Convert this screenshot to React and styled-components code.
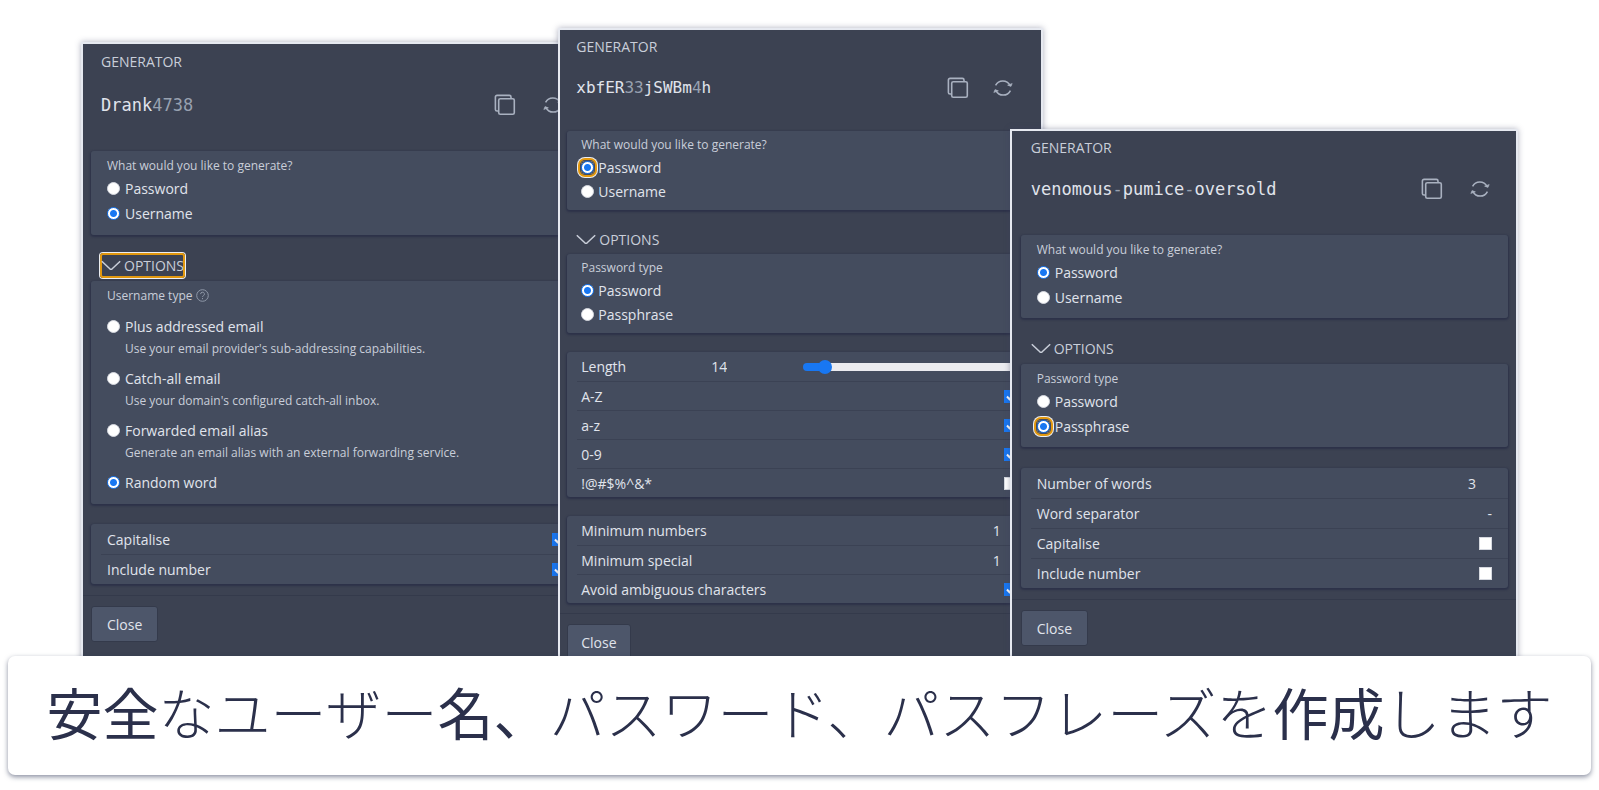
import React, { useId, useState } from 'react'
import styled, { createGlobalStyle, css, ThemeProvider } from 'styled-components'

const GlobalStyle = createGlobalStyle`
  *, *::before, *::after {
    box-sizing: border-box;
  }

  body {
    margin: 0;
    background: #fff;
    font-family: 'Open Sans', 'Noto Sans CJK JP', sans-serif;
  }
`

const colors = {
  background: '#3c4252',
  card: '#444c5e',
  button: '#4d566a',
  border: '#343a4b',
  shadow: '#2d3249',
  text: '#e0e4ec',
  muted: '#c9ced9',
  icon: '#a9b1c0',
  digit: '#98a1b0',
  blue: '#1877f2',
  focus: '#e2980f',
}

const regular = {
  mono: 17,
  inset: 8,
  insetRight: 8,
  pad: 16,
  titlePad: 10,
  titleHeight: 36,
  valueHeight: 50,
  valueGap: 21,
  labelGap: 6,
  groupEnd: 9,
  radio: 25,
  radioGap: 5,
  optionsHeight: 25,
  optionsMargin: '18px 0 3px',
  row: 30,
  cardGap: 20,
  lastGap: 11,
  iconGap: 24,
}

const themes = {
  username: regular,
  password: {
    ...regular,
    mono: 16,
    inset: 7,
    insetRight: 10,
    pad: 14,
    titlePad: 9,
    titleHeight: 34,
    valueHeight: 47,
    valueGap: 20,
    labelGap: 5,
    groupEnd: 7,
    radio: 24,
    radioGap: 4,
    optionsHeight: 22,
    optionsMargin: '18px 0 4px',
    row: 29,
    cardGap: 19,
    lastGap: 10,
    iconGap: 21,
  },
  passphrase: { ...regular, inset: 9, titleHeight: 33, groupEnd: 8, cardGap: 21 },
}

const Page = styled.main`
  min-height: 790px;
`

const Stage = styled.div`
  display: flex;
  align-items: flex-start;
  height: 656px;
  padding: 0 81px;
  overflow: hidden;
`

const Window = styled.section`
  flex: ${props => props.grow} 1 0;
  min-width: 0;
  height: 700px;
  margin-top: ${props => props.top}px;
  border: 2px solid #e6e9f0;
  background: ${colors.background};
  color: ${colors.text};
  font-size: 14px;
  font-weight: 500;
  box-shadow: 0 0 6px rgba(60, 66, 100, 0.4);
  /* keeps every window above the one on its left */
  isolation: isolate;

  & + & {
    margin-left: -33px;
  }
`

const Body = styled.div`
  padding: 0 ${props => props.theme.insetRight}px 0 ${props => props.theme.inset}px;
`

const Title = styled.h2`
  height: ${props => props.theme.titleHeight}px;
  line-height: ${props => props.theme.titleHeight}px;
  margin: 0;
  padding-left: ${props => props.theme.titlePad}px;
  font-size: 14px;
  font-weight: 500;
  color: ${colors.muted};
`

const ValueRow = styled.div`
  display: flex;
  align-items: center;
  gap: ${props => props.theme.iconGap}px;
  height: ${props => props.theme.valueHeight}px;
  margin-bottom: ${props => props.theme.valueGap}px;
  padding: 0 16px 0 ${props => props.theme.titlePad}px;
`

const Value = styled.output`
  flex: 1;
  font-family: 'DejaVu Sans Mono', monospace;
  font-size: ${props => props.theme.mono}px;
`

const Digit = styled.span`
  color: ${colors.digit};
`

const IconButton = styled.button`
  display: flex;
  align-items: center;
  justify-content: center;
  width: 24px;
  height: 24px;
  padding: 0;
  border: 0;
  background: none;
  color: ${colors.icon};
`

const Card = styled.div`
  margin: 0 0 ${props => (props.last ? props.theme.lastGap : props.theme.cardGap)}px;
  border-radius: 3px;
  background: ${colors.card};
  box-shadow: 0 1px 2px 1px ${colors.shadow};
`

const Group = styled.fieldset`
  min-width: 0;
  margin: 0 0 ${props => (props.spaced ? props.theme.cardGap : 0)}px;
  padding: ${props => props.theme.labelGap}px ${props => props.theme.pad}px ${props => props.theme.groupEnd}px;
  border: 0;
  border-radius: 3px;
  background: ${colors.card};
  box-shadow: 0 1px 2px 1px ${colors.shadow};
`

const Legend = styled.legend`
  float: left;
  display: flex;
  align-items: center;
  gap: 4px;
  width: 100%;
  height: 17px;
  margin-bottom: 2px;
  padding: 0;
  font-size: 12px;
  color: ${colors.muted};

  & + * {
    clear: both;
  }
`

const RadioRow = styled.label`
  display: flex;
  align-items: center;
  gap: ${props => props.theme.radioGap}px;
  height: ${props => props.theme.radio}px;
`

const RadioItem = styled.div`
  padding-top: ${props => (props.spaced ? 8 : 0)}px;
`

const RadioMark = styled.span`
  display: flex;
  border-radius: 4px;
  ${props => props.focused && css`
    box-shadow: 0 0 0 1px #3f4a63, 0 0 0 3px ${colors.focus}, 0 0 0 4px #eceef2;
  `}
`

const RadioInput = styled.input`
  appearance: none;
  width: 13px;
  height: 13px;
  margin: 0;
  border: 1px solid #d5d8df;
  border-radius: 50%;
  background: #fff;

  &:checked {
    border-color: ${colors.blue};
    background: radial-gradient(circle, ${colors.blue} 3px, #fff 4px);
  }
`

const Description = styled.p`
  height: 19px;
  line-height: 19px;
  margin: 0 0 0 18px;
  font-size: 12px;
  color: ${colors.muted};
  white-space: nowrap;
`

const OptionsButton = styled.button`
  display: flex;
  align-items: center;
  gap: 3px;
  height: ${props => props.theme.optionsHeight}px;
  margin: ${props => props.theme.optionsMargin};
  margin-left: ${props => props.theme.titlePad - 1}px;
  padding: 0 1px;
  border: 0;
  border-radius: 3px;
  background: none;
  color: ${colors.muted};
  font: inherit;
  ${props => props.focused && css`
    box-shadow: inset 0 0 0 2px ${colors.focus}, 0 0 0 1px #eceef2;
  `}
`

const Row = styled.div`
  display: flex;
  align-items: center;
  height: ${props => props.theme.row}px;
  margin-left: 10px;
  padding: 0 ${props => props.theme.pad}px 0 ${props => props.theme.pad - 10}px;

  & + & {
    border-top: 1px solid #3b4254;
  }
`

const RowLabel = styled.label`
  flex: 1;
`

const LengthLabel = styled.label`
  width: 96px;
`

const Field = styled.input`
  width: 66px;
  padding: 0 ${props => (props.type === 'number' ? 16 : 0)}px 0 0;
  border: 0;
  outline: 0;
  background: none;
  color: ${colors.text};
  font: inherit;
  text-align: right;
  appearance: textfield;

  &::-webkit-inner-spin-button {
    display: none;
  }
`

const CheckMark = styled.span`
  display: grid;
  width: 13px;
  height: 13px;

  & > * {
    grid-area: 1 / 1;
  }

  & > svg {
    pointer-events: none;
    z-index: 1;
  }
`

const CheckInput = styled.input`
  appearance: none;
  width: 13px;
  height: 13px;
  margin: 0;
  border: 1px solid #d5d8df;
  background: #fff;

  &:checked {
    border-color: ${colors.blue};
    background: ${colors.blue};
  }
`

const Slider = styled.input`
  appearance: none;
  width: 49%;
  height: 8px;
  margin: 0 0 0 auto;
  border-radius: 4px;
  background: linear-gradient(to right, ${colors.blue} 10%, #ebebef 10%);

  &::-webkit-slider-thumb {
    appearance: none;
    width: 14px;
    height: 14px;
    border-radius: 50%;
    background: ${colors.blue};
  }
`

const Footer = styled.footer`
  padding: 10px ${props => props.theme.inset}px;
  border-top: 1px solid ${colors.border};
`

const CloseButton = styled.button`
  height: 36px;
  padding: 0 ${props => props.theme.pad - 1}px;
  border: 1px solid ${colors.border};
  border-radius: 3px;
  background: ${colors.button};
  color: ${colors.text};
  font: inherit;
`

const Banner = styled.h1`
  position: relative;
  display: flex;
  align-items: center;
  justify-content: center;
  height: 119px;
  margin: 0 8px;
  padding-bottom: 10px;
  border-radius: 7px;
  background: #fff;
  box-shadow: 0 2px 5px rgba(43, 52, 84, 0.55);
  color: #2b304b;
  font-family: 'Noto Sans CJK JP', sans-serif;
  font-size: 56px;
  font-weight: 300;
  white-space: nowrap;
`

const Strong = styled.strong`
  font-weight: 400;
`

const CopyIcon = () => (
  <svg width="22" height="22" viewBox="0 0 22 22" fill="none" stroke="currentColor" strokeWidth="1.6">
    <rect x="4.7" y="4.7" width="15.6" height="15.6" rx="1.6" />
    <path d="M4.7 17H3a1.6 1.6 0 0 1-1.6-1.6V3A1.6 1.6 0 0 1 3 1.4h12.4A1.6 1.6 0 0 1 17 3v1.7" />
  </svg>
)

const RefreshIcon = () => (
  <svg width="20" height="20" viewBox="0 0 20 20" fill="none" stroke="currentColor" strokeWidth="1.5">
    <path d="M2.6 7.4A8 8 0 0 1 17 7.4M17.4 12.6A8 8 0 0 1 3 12.6" />
    <path d="M14.6 7.2l3.4 1.2 1.2-2.9zM5.4 12.8l-3.4-1.2-1.2 2.9z" fill="currentColor" strokeWidth=".6" />
  </svg>
)

const ChevronIcon = () => (
  <svg width="20" height="11" viewBox="0 0 20 11" fill="none" stroke="currentColor" strokeWidth="1.5">
    <path d="M.8 1.2L8.8 8.8Q10 9.8 11.2 8.8L19.2 1.2" />
  </svg>
)

const HelpIcon = () => (
  <svg width="13" height="13" viewBox="0 0 13 13" fill="none" stroke="#8f98a8">
    <circle cx="6.5" cy="6.5" r="5.8" />
    <path d="M4.6 5.1a1.9 1.9 0 1 1 2.7 1.7c-.6.3-.8.6-.8 1.2M6.5 9v1.2" />
  </svg>
)

const Radios = ({ label, help, items, selected, focused, spaced }) => {
  const name = useId()
  return (
    <Group spaced={spaced}>
      <Legend>{label}{help && <HelpIcon />}</Legend>
      {items.map(item => (
        <RadioItem key={item.label} spaced={help}>
          <RadioRow>
            <RadioMark focused={item.label === focused}>
              <RadioInput type="radio" name={name} defaultChecked={item.label === selected} />
            </RadioMark>
            {item.label}
          </RadioRow>
          {item.text && <Description>{item.text}</Description>}
        </RadioItem>
      ))}
    </Group>
  )
}

const CheckRow = ({ label, checked }) => {
  const id = useId()
  const [on, setOn] = useState(!!checked)
  return (
    <Row>
      <RowLabel htmlFor={id}>{label}</RowLabel>
      <CheckMark>
        <CheckInput id={id} type="checkbox" checked={on} onChange={() => setOn(!on)} />
        {on && (
          <svg width="13" height="13" viewBox="0 0 13 13" fill="none" stroke="#fff" strokeWidth="2">
            <path d="M3 6.5l2.5 2.7L10.2 4" />
          </svg>
        )}
      </CheckMark>
    </Row>
  )
}

const FieldRow = ({ label, type = 'number', value }) => {
  const id = useId()
  return (
    <Row>
      <RowLabel htmlFor={id}>{label}</RowLabel>
      <Field id={id} type={type} defaultValue={value} />
    </Row>
  )
}

const LengthRow = ({ value }) => {
  const id = useId()
  return (
    <Row>
      <LengthLabel htmlFor={id}>Length</LengthLabel>
      <Field id={id} type="number" defaultValue={value} />
      <Slider type="range" aria-label="Length" min="5" max="128" defaultValue={value} />
    </Row>
  )
}

const Generator = ({ theme, grow, top, value, selected, focused, optionsFocused, children }) => (
  <ThemeProvider theme={theme}>
    <Window grow={grow} top={top}>
      <Body>
        <Title>GENERATOR</Title>
        <ValueRow>
          <Value>
            {value.split(/([\d-]+)/).map((part, i) => (
              i % 2 ? <Digit key={i}>{part}</Digit> : part
            ))}
          </Value>
          <IconButton aria-label="Copy"><CopyIcon /></IconButton>
          <IconButton aria-label="Regenerate"><RefreshIcon /></IconButton>
        </ValueRow>
        <Radios
          label="What would you like to generate?"
          items={[{ label: 'Password' }, { label: 'Username' }]}
          selected={selected}
          focused={focused}
        />
        <OptionsButton focused={optionsFocused}><ChevronIcon />OPTIONS</OptionsButton>
        {children}
      </Body>
      <Footer>
        <CloseButton>Close</CloseButton>
      </Footer>
    </Window>
  </ThemeProvider>
)

const usernameTypes = [
  { label: 'Plus addressed email', text: "Use your email provider's sub-addressing capabilities." },
  { label: 'Catch-all email', text: "Use your domain's configured catch-all inbox." },
  { label: 'Forwarded email alias', text: 'Generate an email alias with an external forwarding service.' },
  { label: 'Random word' },
]

const passwordTypes = [{ label: 'Password' }, { label: 'Passphrase' }]

const App = () => (
  <Page>
    <GlobalStyle />
    <Stage>
      <Generator theme={themes.username} grow={510} top={42} value="Drank4738" selected="Username" optionsFocused>
        <Radios label="Username type" help items={usernameTypes} selected="Random word" spaced />
        <Card last>
          <CheckRow label="Capitalise" checked />
          <CheckRow label="Include number" checked />
        </Card>
      </Generator>
      <Generator theme={themes.password} grow={484} top={28} value="xbfER33jSWBm4h" selected="Password" focused="Password">
        <Radios label="Password type" items={passwordTypes} selected="Password" spaced />
        <Card>
          <LengthRow value={14} />
          <CheckRow label="A-Z" checked />
          <CheckRow label="a-z" checked />
          <CheckRow label="0-9" checked />
          <CheckRow label="!@#$%^&*" />
        </Card>
        <Card last>
          <FieldRow label="Minimum numbers" value={1} />
          <FieldRow label="Minimum special" value={1} />
          <CheckRow label="Avoid ambiguous characters" checked />
        </Card>
      </Generator>
      <Generator theme={themes.passphrase} grow={508} top={129} value="venomous-pumice-oversold" selected="Password">
        <Radios label="Password type" items={passwordTypes} selected="Passphrase" focused="Passphrase" spaced />
        <Card last>
          <FieldRow label="Number of words" value={3} />
          <FieldRow label="Word separator" type="text" value="-" />
          <CheckRow label="Capitalise" />
          <CheckRow label="Include number" />
        </Card>
      </Generator>
    </Stage>
    <Banner>
      <span>
        <Strong>安全</Strong>なユーザー<Strong>名、</Strong>パスワード、パスフレーズを<Strong>作成</Strong>します
      </span>
    </Banner>
  </Page>
)

export default App
